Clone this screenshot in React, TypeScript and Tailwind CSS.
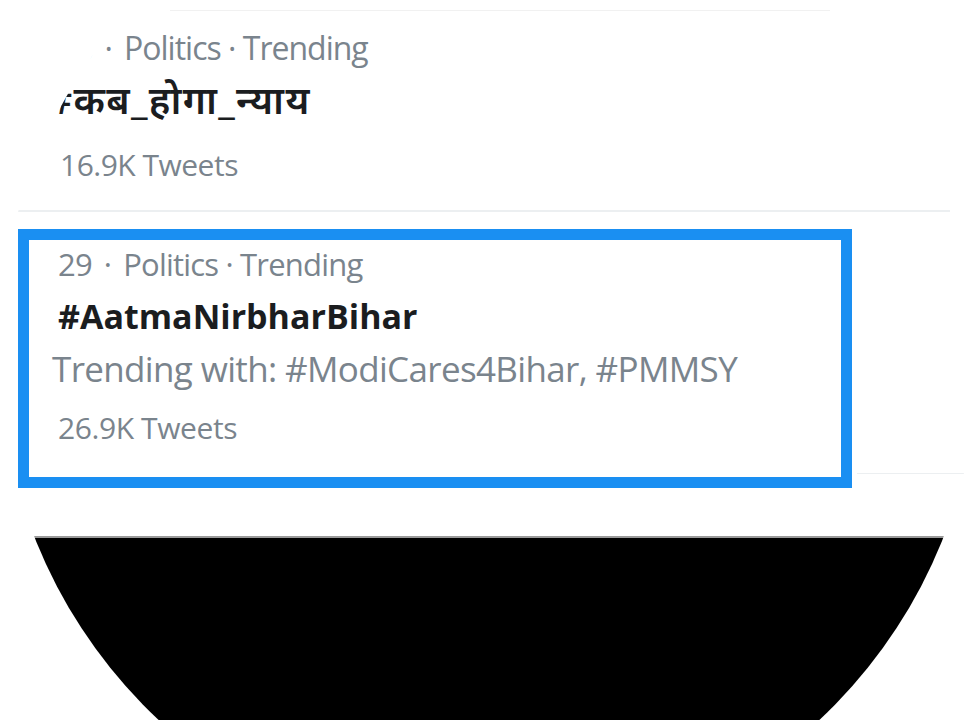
export default function App() {
  const grey = "text-[#7a848d]";
  return (
    <div className="w-[974px] h-[720px] bg-white overflow-hidden font-['Open_Sans','Noto_Sans','Noto_Sans_Devanagari',sans-serif]">
      <div className="w-[974px] h-[720px] flex flex-col bg-white [clip-path:ellipse(490px_501px_at_489px_350px)]">
        <div className="mt-[10px] ml-[170px] w-[660px] h-px bg-[#f1f1f1]" />
        <div className={`mt-[17px] ml-[58px] h-[40px] leading-[40px] text-[32px] tracking-[-1px] whitespace-nowrap ${grey}`}>
          28<span className="mx-[12px]">·</span>Politics · Trending
        </div>
        <div className="mt-[9px] ml-[47px] h-[44px] leading-[44px] text-[39px] tracking-[1.3px] font-semibold text-[#1b1d1f] whitespace-nowrap">
          #कब_होगा_न्याय
        </div>
        <div className={`mt-[24px] ml-[60px] h-[40px] leading-[40px] text-[30px] tracking-[-0.5px] whitespace-nowrap ${grey}`}>
          16.9K Tweets
        </div>
        <div className="mt-[25px] mr-[24px] h-[2px] bg-[#eceff1]" />
        <div className="mt-[17px] flex items-end">
          <div className="ml-[18px] w-[834px] h-[259px] border-[11px] border-[#1a8ff2] bg-white flex flex-col pl-[29px]">
            <div className={`mt-[4px] h-[40px] leading-[40px] text-[31px] tracking-[-0.8px] whitespace-nowrap ${grey}`}>
              29<span className="mx-[12px]">·</span>Politics · Trending
            </div>
            <div className="mt-[12px] h-[40px] leading-[40px] text-[34px] font-bold text-[#1b1d1f] whitespace-nowrap">
              #AatmaNirbharBihar
            </div>
            <div className={`mt-[11px] -ml-[6px] h-[44px] leading-[44px] text-[35px] tracking-[-0.65px] whitespace-nowrap ${grey}`}>
              Trending with: #ModiCares4Bihar, #PMMSY
            </div>
            <div className={`mt-[17px] h-[40px] leading-[40px] text-[30px] tracking-[-0.4px] whitespace-nowrap ${grey}`}>
              26.9K Tweets
            </div>
          </div>
          <div className="ml-[5px] mb-[14px] w-[110px] h-px bg-[#eceff1]" />
        </div>
        <div className="mt-[48px] h-[2px] bg-[#9a9a9a]" />
        <div className="flex-1 bg-black" />
      </div>
    </div>
  );
}
